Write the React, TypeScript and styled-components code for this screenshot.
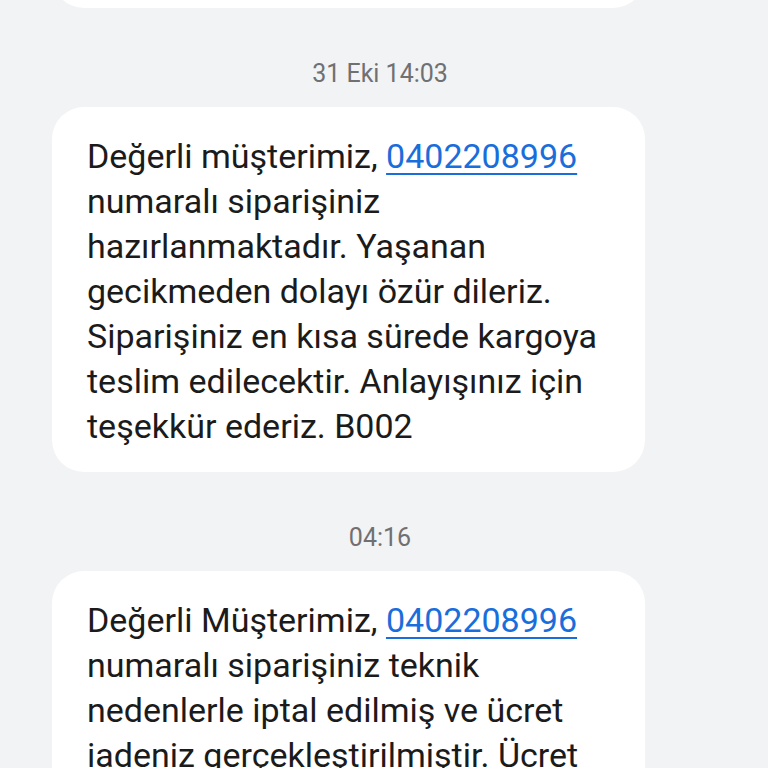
import React from "react";
import styled, { createGlobalStyle } from "styled-components";

const GlobalStyle = createGlobalStyle`
  html, body {
    margin: 0;
    padding: 0;
    background: #f2f3f5;
  }
  body {
    font-family: Roboto, "Noto Sans", "Liberation Sans", sans-serif;
    overflow: hidden;
  }
`;

const Screen = styled.div`
  width: 768px;
  height: 768px;
  overflow: hidden;
  background: #f2f3f5;
`;

const Thread = styled.div<{ $scroll: number }>`
  display: flex;
  flex-direction: column;
  align-items: flex-start;
  padding: 0 123px 0 52px;
  margin-top: ${(p) => -p.$scroll}px;
`;

const Stamp = styled.div`
  align-self: stretch;
  text-align: center;
  font-size: 25px;
  line-height: 30px;
  color: #707072;
  padding: 51px 0 18px;
  margin-right: -63px;
  box-sizing: border-box;
`;

const Bubble = styled.div`
  box-sizing: border-box;
  width: 593px;
  background: #ffffff;
  border-radius: 32px;
  padding: 27px 30px 23px 35px;
  font-size: 34px;
  line-height: 45px;
  color: #1b1b1b;
`;

const Link = styled.span`
  color: #1a6edb;
  text-decoration: underline;
  text-decoration-thickness: 1.5px;
  text-underline-offset: 5px;
`;

type Msg = { time?: string; before: string; link?: string; after?: string };

const messages: Msg[] = [
  { before: "Siparişiniz alınmıştır. B002" },
  {
    time: "31 Eki 14:03",
    before: "Değerli müşterimiz, ",
    link: "0402208996",
    after:
      " numaralı siparişiniz hazırlanmaktadır. Yaşanan gecikmeden dolayı özür dileriz. Siparişiniz en kısa sürede kargoya teslim edilecektir. Anlayışınız için teşekkür ederiz. B002",
  },
  {
    time: "04:16",
    before: "Değerli Müşterimiz, ",
    link: "0402208996",
    after:
      " numaralı siparişiniz teknik nedenlerle iptal edilmiş ve ücret iadeniz gerçekleştirilmiştir. Ücret iadesinin hesabınıza yansıması bankanıza bağlı olarak birkaç iş günü sürebilir. B002",
  },
];

export default function App() {
  return (
    <Screen>
      <GlobalStyle />
      <Thread $scroll={87}>
        {messages.map((m, i) => (
          <React.Fragment key={i}>
            {m.time && <Stamp>{m.time}</Stamp>}
            <Bubble>
              {m.before}
              {m.link && <Link>{m.link}</Link>}
              {m.after}
            </Bubble>
          </React.Fragment>
        ))}
      </Thread>
    </Screen>
  );
}
